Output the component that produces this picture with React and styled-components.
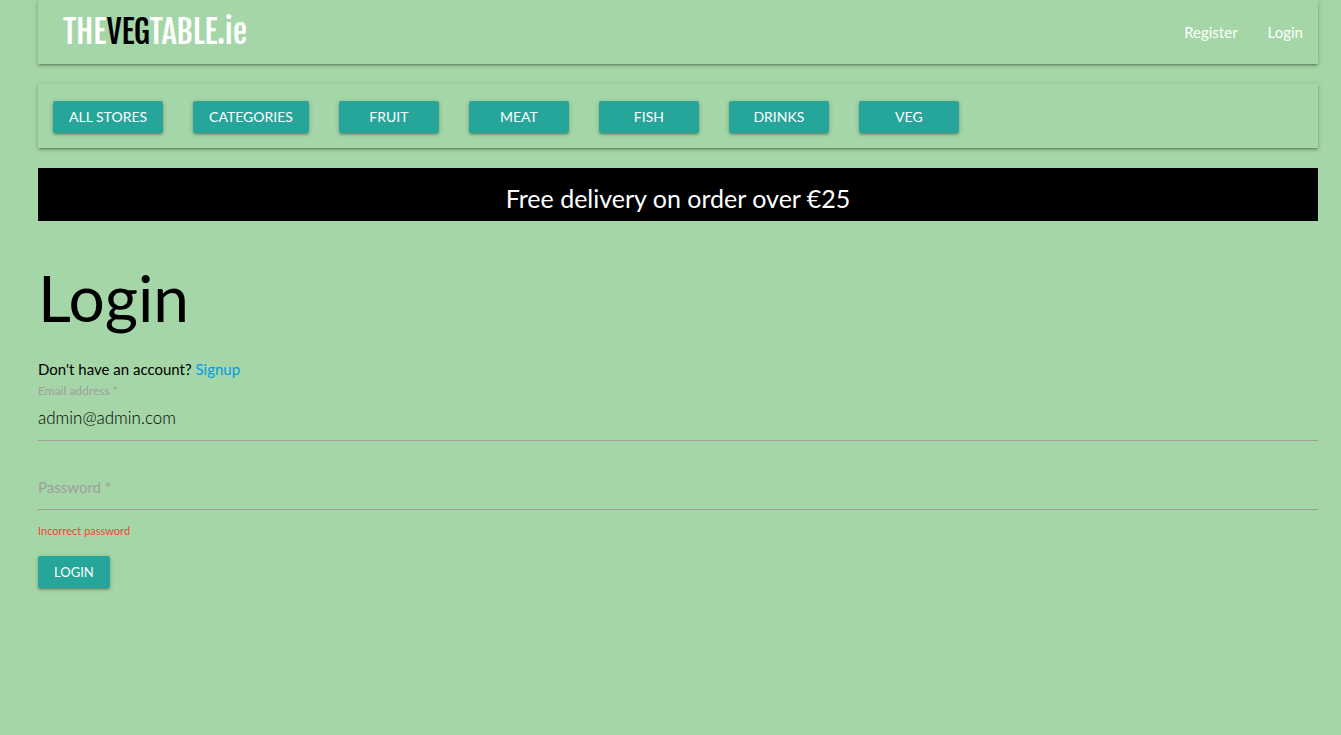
import React from "react";
import styled, { createGlobalStyle } from "styled-components";

const GlobalStyle = createGlobalStyle`
  *, *::before, *::after { box-sizing: border-box; }
  body {
    margin: 0;
    background: #a5d6a7;
    color: #000;
    font-family: Lato, "Liberation Sans", sans-serif;
    font-size: 15px;
    line-height: 22px;
  }
`;

const raised = `box-shadow: 0 2px 2px 0 rgba(0,0,0,.14), 0 3px 1px -2px rgba(0,0,0,.12), 0 1px 5px 0 rgba(0,0,0,.2);`;

const Page = styled.div`
  min-height: 100vh;
  padding: 0 23px 20px 38px;
`;

const Bar = styled.nav`
  display: flex;
  align-items: center;
  height: 64px;
  margin-bottom: 20px;
  ${raised}
`;

const TopBar = styled(Bar)`
  justify-content: space-between;
  padding: 0 15px 0 25px;
`;

const StoreBar = styled(Bar)`
  gap: 30px;
  padding: 2px 15px 0;
`;

const Logo = styled.a`
  color: #fff;
  font-family: "Fjalla One", "Open Sans Condensed", "Liberation Sans Narrow", sans-serif;
  font-size: 32px;
  font-weight: 400;
  line-height: 60px;
  text-decoration: none;
`;

const LogoAccent = styled.span`
  color: #000;
`;

const Links = styled.div`
  display: flex;
  gap: 30px;
`;

const NavLink = styled.a`
  color: #fff;
  font-size: 15px;
  text-decoration: none;
`;

const Button = styled.button`
  height: 32px;
  min-width: ${(p) => (p.$wide ? "100px" : "0")};
  padding: 0 16px;
  border: 0;
  border-radius: 2px;
  background: #26a69a;
  color: #fff;
  font-family: inherit;
  font-size: ${(p) => (p.$wide ? "14px" : "13px")};
  line-height: 32px;
  text-transform: uppercase;
  cursor: pointer;
  ${raised}
`;

const Banner = styled.div`
  padding: 15px 0 8px;
  background: #000;
  color: #fff;
  font-size: 25px;
  line-height: 30px;
  text-align: center;
`;

const Title = styled.h1`
  margin: 41px 0 24px;
  font-size: 64px;
  font-weight: 400;
  line-height: 72px;
`;

const Prompt = styled.p`
  margin: 0;
`;

const SignupLink = styled.a`
  color: #039be5;
  text-decoration: none;
`;

const Field = styled.div`
  position: relative;
  padding-top: 16px;
  margin-bottom: 8px;
`;

const Label = styled.label`
  position: absolute;
  left: 0;
  top: ${(p) => (p.$floating ? "0" : "27px")};
  color: #9e9e9e;
  font-size: ${(p) => (p.$floating ? "12px" : "15px")};
  line-height: 22px;
`;

const Input = styled.input`
  display: block;
  width: 100%;
  height: 45px;
  padding: 0 0 2px;
  border: 0;
  border-bottom: 1px solid #9e9e9e;
  outline: 0;
  background: transparent;
  color: #000;
  font-family: inherit;
  font-size: 17px;
  font-weight: 300;
`;

const ErrorText = styled.p`
  margin: 0 0 12px;
  color: #f44336;
  font-size: 11px;
  line-height: 26px;
`;

const categories = ["All stores", "Categories", "Fruit", "Meat", "Fish", "Drinks", "Veg"];

export default function App() {
  return (
    <>
      <GlobalStyle />
      <Page>
        <TopBar aria-label="Account">
          <Logo href="#">
            THE<LogoAccent>VEG</LogoAccent>TABLE.ie
          </Logo>
          <Links>
            <NavLink href="#register">Register</NavLink>
            <NavLink href="#login">Login</NavLink>
          </Links>
        </TopBar>
        <StoreBar aria-label="Stores">
          {categories.map((name) => (
            <Button key={name} type="button" $wide>
              {name}
            </Button>
          ))}
        </StoreBar>
        <Banner>Free delivery on order over €25</Banner>
        <main>
          <Title>Login</Title>
          <Prompt>
            Don't have an account? <SignupLink href="#signup">Signup</SignupLink>
          </Prompt>
          <form onSubmit={(e) => e.preventDefault()}>
            <Field>
              <Label htmlFor="email" $floating>Email address *</Label>
              <Input id="email" type="email" defaultValue="admin@admin.com" />
            </Field>
            <Field>
              <Label htmlFor="password">Password *</Label>
              <Input id="password" type="password" aria-describedby="password-error" />
            </Field>
            <ErrorText id="password-error">Incorrect password</ErrorText>
            <Button type="submit">Login</Button>
          </form>
        </main>
      </Page>
    </>
  );
}
